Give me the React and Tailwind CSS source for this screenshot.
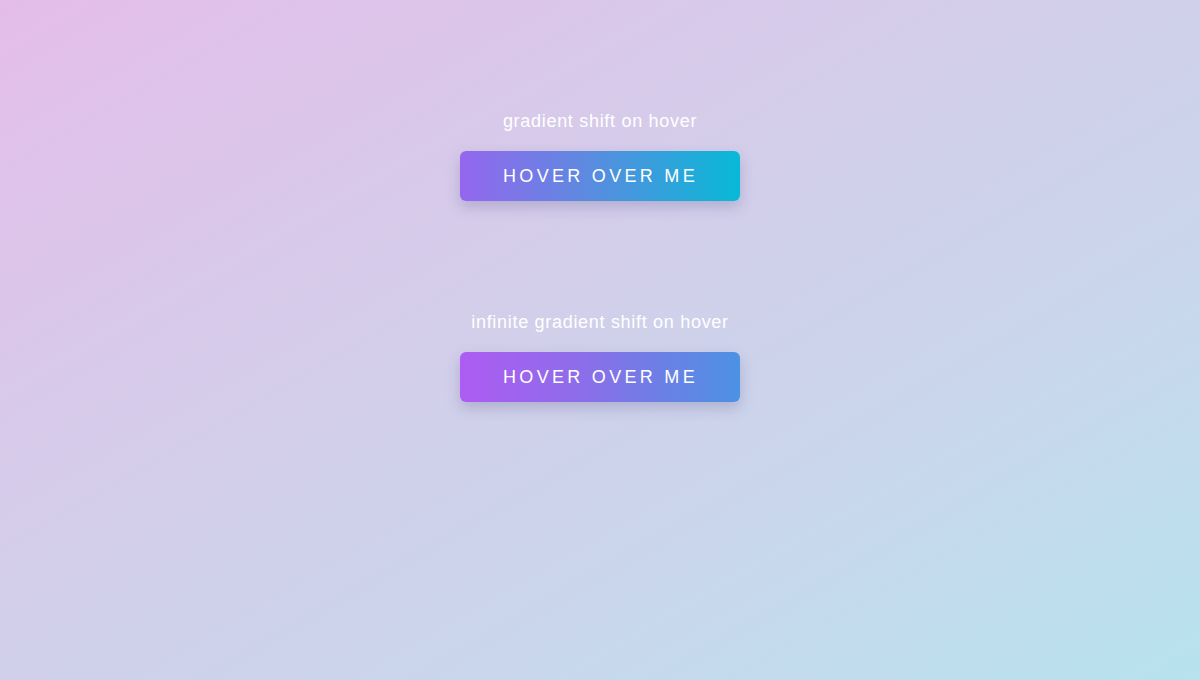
import React from 'react';

const demos = [
  {
    label: 'gradient shift on hover',
    btn: 'bg-[linear-gradient(to_right,#9466ee_0%,#5d8ae0_45%,#07b9d6_100%)]',
  },
  {
    label: 'infinite gradient shift on hover',
    btn: 'bg-[linear-gradient(to_right,#ae5cf3_0%,#8b6ee9_45%,#4c92e3_100%)]',
  },
];

export default function App() {
  return (
    <div className="min-h-[680px] w-full bg-[linear-gradient(150deg,#e4bde9_0%,#d4cdea_40%,#c9d6ec_70%,#b7e2ee_100%)] font-['Liberation_Sans',Arial,sans-serif]">
      <div className="flex flex-col items-center pt-[109px] gap-[109px]">
        {demos.map(d => (
          <div key={d.label} className="flex flex-col items-center">
            <div className="text-[18px] leading-[24px] text-white tracking-[0.7px]">{d.label}</div>
            <button
              className={`mt-[18px] w-[280px] h-[50px] rounded-[6px] text-white text-[18px] uppercase tracking-[3.3px] pl-[1px] shadow-[0_6px_14px_rgba(90,90,140,0.28)] ${d.btn}`}
            >
              Hover over me
            </button>
          </div>
        ))}
      </div>
    </div>
  );
}
